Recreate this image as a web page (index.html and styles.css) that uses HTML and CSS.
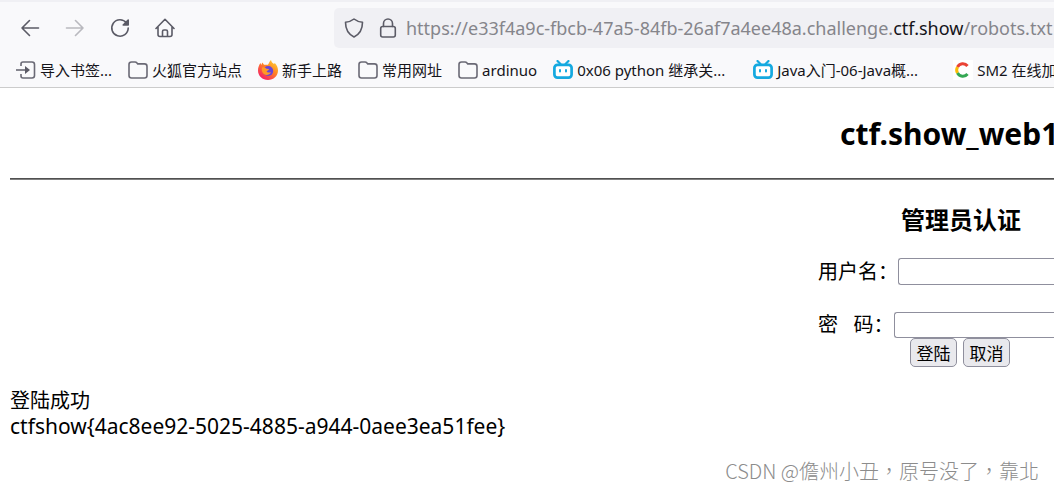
FILE: index.html
```html
<!DOCTYPE html>
<html lang="zh-CN">
<head>
<meta charset="utf-8">
<title>ctf.show_web1</title>
<link rel="stylesheet" href="styles.css">
</head>
<body>
<svg class="defs" aria-hidden="true">
  <symbol id="folder" viewBox="0 0 20 20"><path d="M1 15.500V4.500Q1 2 3.500 2H7Q8.200 2 9 3l.7.900h6.800Q19 3.900 19 6.400v9.100q0 2.500-2.500 2.500h-13Q1 18 1 15.500Z" fill="none" stroke="#6a6975" stroke-width="1.600"/></symbol>
  <symbol id="tv" viewBox="0 0 20 20"><path d="m4.500 1 3 3M15.500 1l-3 3" stroke="#14a9e0" stroke-width="2.200" stroke-linecap="round"/><rect x="1.400" y="4.800" width="17.200" height="12.800" rx="3" fill="#fff" stroke="#14a9e0" stroke-width="2.700"/><path d="M7 10v1.500M13 10v1.500" stroke="#14a9e0" stroke-width="2" stroke-linecap="round"/></symbol>
</svg>
<header class="browser">
  <div class="tabs"></div>
  <nav class="toolbar" aria-label="导航">
    <button class="tool" aria-label="后退"><svg viewBox="0 0 20 20"><path d="M18.500 10H2M9.500 2.500 2 10l7.500 7.500"/></svg></button>
    <button class="tool" aria-label="前进" disabled><svg viewBox="0 0 20 20"><path d="M1.500 10H18M10.500 2.500 18 10l-7.500 7.500"/></svg></button>
    <button class="tool" aria-label="刷新"><svg viewBox="0 0 20 20"><path d="M16.500 5A8.200 8.200 0 1 0 18.200 10"/><path class="solid" d="M18.200 2v5h-5Z"/></svg></button>
    <button class="tool" aria-label="主页"><svg viewBox="0 0 20 20"><path d="M1 10.500 10 1.300l9 9.200M3 9v7.500Q3 18.500 5 18.500h10q2 0 2-2V9M7.500 18.500v-5q0-1.500 1.500-1.500h2q1.500 0 1.500 1.500v5"/></svg></button>
    <div class="address">
      <svg class="mark" viewBox="0 0 20 20"><path d="M10 1c2.500 2 5.500 2.900 8.500 3.300 0 6.700-2.500 11.800-8.500 14.700C4 16.100 1.500 11 1.500 4.300 4.500 3.900 7.500 3 10 1Z"/></svg>
      <svg class="mark" viewBox="0 0 20 20"><rect x="2.700" y="8.500" width="14.600" height="10.500" rx="2"/><path d="M5.500 8.500V5.500a4.500 4.500 0 0 1 9 0v3"/></svg>
      <span class="url">https://e33f4a9c-fbcb-47a5-84fb-26af7a4ee48a.challenge.<span class="domain">ctf.show</span>/robots.txt</span>
    </div>
  </nav>
  <nav class="bookmarks" aria-label="书签">
    <a class="bookmark" href="#"><svg viewBox="0 0 20 20"><path d="M5 6V4q0-2 2-2h9q2.500 0 2.500 2.500v11Q18.500 18 16 18H7q-2 0-2-2v-2" fill="none" stroke="#6a6975" stroke-width="1.600"/><path d="M0 10h10" stroke="#6a6975" stroke-width="1.600"/><path d="m9 6 5 4-5 4Z" fill="#5b5a66"/></svg>导入书签...</a>
    <a class="bookmark" href="#"><svg><use href="#folder"/></svg>火狐官方站点</a>
    <a class="bookmark" href="#"><svg viewBox="0 0 20 20"><defs><linearGradient id="fire" x1="1" y1="0" x2=".25" y2="1"><stop offset="0" stop-color="#ffe13c"/><stop offset=".45" stop-color="#ff8a22"/><stop offset="1" stop-color="#f51b68"/></linearGradient></defs><path d="M13 0c.2 2 1.800 3 3 4l.8-1C19 5 20 7.800 20 10.500 20 16 15.500 20 10 20S0 16 0 10.500C0 7.500 1 5 2.500 3l.8 2 1-2.500 1.700 2.300h4C11 3 11.500 1.300 13 0Z" fill="url(#fire)"/><circle cx="10.200" cy="11" r="5" fill="#6845d8"/><path d="M4 7.500c2-.7 3.500 0 4.500 1.300l2.500.3c-.4 1.500-2 1.600-2.400 2.600 1 1.400 3.400.5 4.400.5-1.300 3-5.300 3.500-7.500 1.500C3.800 12 3.500 9.500 4 7.500Z" fill="#ff9a24"/></svg>新手上路</a>
    <a class="bookmark" href="#"><svg><use href="#folder"/></svg>常用网址</a>
    <a class="bookmark" href="#"><svg><use href="#folder"/></svg>ardinuo</a>
    <a class="bookmark wide" href="#"><svg><use href="#tv"/></svg>0x06 python 继承关...</a>
    <a class="bookmark wide" href="#"><svg><use href="#tv"/></svg>Java入门-06-Java概...</a>
    <a class="bookmark" href="#"><svg viewBox="0 0 20 20"><path fill="#fff" d="M0 0h20v20H0z"/><g fill="none" stroke-width="3"><path d="M4.500 7A6 6 0 0 1 14.500 6" stroke="#ea4335"/><path d="M4.500 7a6 6 0 0 0 0 6" stroke="#fbbc05"/><path d="M4.500 13a6 6 0 0 0 10 1" stroke="#34a853"/></g></svg>SM2 在线加</a>
  </nav>
</header>
<main class="page">
  <h1 class="title">ctf.show_web1</h1>
  <hr class="rule">
  <form class="login">
    <h2 class="subtitle">管理员认证</h2>
    <div class="field"><label for="user">用户名：</label><input id="user" type="text"></div>
    <div class="field"><label for="pass">密&nbsp;&nbsp; 码：</label><input id="pass" type="password"></div>
    <div class="actions"><button type="button">登陆</button><button type="button">取消</button></div>
  </form>
  <p class="result">登陆成功<br><span class="flag">ctfshow{4ac8ee92-5025-4885-a944-0aee3ea51fee}</span></p>
</main>
<footer class="credit" lang="zh-TW">CSDN @儋州小丑，原号没了，靠北</footer>
</body>
</html>
```
FILE: styles.css
```css
* { box-sizing: border-box; }
body {
  margin: 0;
  min-height: 100vh;
  display: flex;
  flex-direction: column;
  overflow: hidden;
  background: #fff;
  color: #000;
  font-family: "Noto Sans", "Noto Sans CJK SC", sans-serif;
}
.defs { position: absolute; width: 0; height: 0; }
.browser { background: #f9f9fb; border-bottom: 1px solid #ccc; }
.tabs { height: 2px; background: #f0f0f4; }
.toolbar { display: flex; align-items: center; height: 51px; padding-left: 20px; gap: 25px; }
.tool { border: 0; padding: 0; background: none; width: 20px; height: 20px; }
.tool svg, .mark {
  display: block;
  flex: none;
  width: 20px;
  height: 20px;
  fill: none;
  stroke: #5b5b66;
  stroke-width: 1.600;
  stroke-linecap: round;
  stroke-linejoin: round;
}
.tool:disabled { opacity: .4; }
.tool .solid { fill: #5b5b66; }
.address {
  flex: 1;
  min-width: 0;
  display: flex;
  align-items: center;
  height: 40px;
  margin-left: 124px;
  padding-left: 10px;
  gap: 14px;
  border-radius: 5px 0 0 5px;
  background: #f0f0f4;
}
.toolbar .address { margin-left: 134px; }
.url { margin-left: -6px; color: #85858b; font-size: 18px; white-space: nowrap; }
.domain { color: #15141a; }
.bookmarks { display: flex; align-items: center; height: 34px; padding-left: 16px; gap: 16px; }
.bookmark {
  display: flex;
  flex: none;
  align-items: center;
  gap: 4px;
  color: #15141a;
  font-size: 15px;
  line-height: 20px;
  text-decoration: none;
  white-space: nowrap;
}
.bookmark svg { width: 20px; height: 20px; }
.wide { width: 184px; }
.page { padding: 24px 0 0 10px; }
.title { margin: 0; padding-left: 830px; font-size: 30px; line-height: 44px; white-space: nowrap; }
.rule { height: 2px; margin: 22px 0 24px; border: 0; border-top: 1px solid #505050; background: #808080; }
.login { padding-left: 808px; font-size: 20px; }
.subtitle { margin: 0 0 22px; padding-left: 83px; font-size: 24px; line-height: 32px; }
.field { display: flex; align-items: center; height: 27px; margin-bottom: 27px; white-space: nowrap; }
.field label { flex: none; line-height: 26px; }
.field input { flex: 1; min-width: 0; height: 27px; border: 1px solid #8f8f9d; border-right: 0; border-radius: 3px 0 0 3px; background: #fff; }
.field + .field { height: 26px; margin-bottom: 0; }
.field + .field input { height: 26px; }
.actions { display: flex; gap: 6px; padding-left: 92px; }
.actions button {
  width: 47px;
  height: 29px;
  padding: 0;
  border: 1px solid #8f8f9d;
  border-radius: 5px;
  background: #e9e9ed;
  color: #000;
  font: 17px "Noto Sans", "Noto Sans CJK SC", sans-serif;
}
.result { margin: 21px 0 0; font-size: 20px; line-height: 26px; }
.flag { font-size: 21px; line-height: 24px; }
.credit {
  margin-top: auto;
  padding: 0 15px 5px 0;
  color: #8c8c8c;
  font: 300 20px/28px "Noto Sans CJK TC", sans-serif;
  text-align: right;
}
```
